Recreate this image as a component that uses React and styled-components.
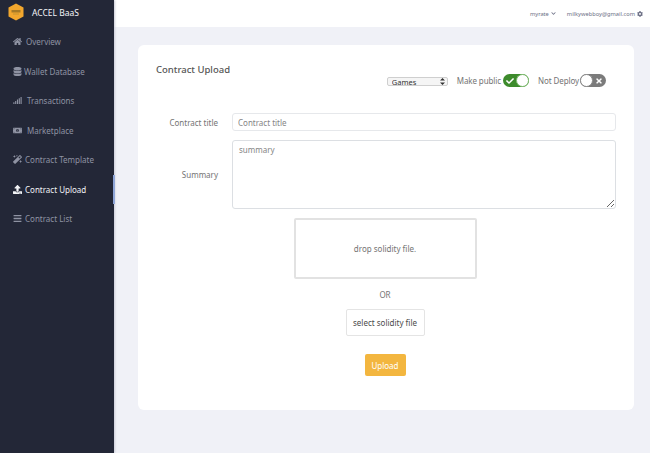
import React from "react";
import styled, { createGlobalStyle } from "styled-components";
import { FaHome, FaDatabase, FaSignal, FaMoneyBillAlt, FaMagic, FaUpload, FaBars, FaCog, FaChevronDown, FaCheck, FaTimes } from "react-icons/fa";

const GlobalStyle = createGlobalStyle`
  html, body { margin: 0; padding: 0; height: 100%; overflow: hidden; }
  body { font-family: "Noto Sans", "Liberation Sans", sans-serif; background: #f0f1f7; }
  * { box-sizing: border-box; }
`;

const menu = [
  { label: "Overview", icon: FaHome, gap: 4 },
  { label: "Wallet Database", icon: FaDatabase, gap: 2 },
  { label: "Transactions", icon: FaSignal, gap: 5 },
  { label: "Marketplace", icon: FaMoneyBillAlt, gap: 5 },
  { label: "Contract Template", icon: FaMagic, gap: 3 },
  { label: "Contract Upload", icon: FaUpload, active: true, gap: 3 },
  { label: "Contract List", icon: FaBars, gap: 3 },
];

const App = () => {
  return (
    <Page>
      <GlobalStyle />
      <Sidebar>
        <Brand>
          <svg width="16" height="18" viewBox="0 0 16 18">
            <polygon points="8,0.5 15.5,4.5 15.5,13.5 8,17.5 0.5,13.5 0.5,4.5" fill="#f2a72e" />
            <rect x="3.5" y="7" width="9" height="2.5" fill="#a67a26" />
            <rect x="5" y="10.5" width="6" height="1" fill="#c4932f" />
          </svg>
          <BrandName>ACCEL BaaS</BrandName>
        </Brand>
        <Menu>
          {menu.map((item) => (
            <MenuItem key={item.label} $active={item.active} $gap={item.gap}>
              <item.icon size={9} />
              {item.label}
            </MenuItem>
          ))}
        </Menu>
      </Sidebar>
      <Main>
        <Header>
          <HeaderLink>
            myrate <FaChevronDown size={5} />
          </HeaderLink>
          <HeaderLink>
            milkywebboy@gmail.com <FaCog size={6} />
          </HeaderLink>
        </Header>
        <Content>
          <Card>
            <CardTop>
              <Title>Contract Upload</Title>
              <Controls>
                <SelectWrap>
                  <CategorySelect defaultValue="Games">
                    <option>Games</option>
                  </CategorySelect>
                  <SelectArrows width="5" height="7" viewBox="0 0 5 7">
                    <path d="M2.5 0L5 2.6H0zM2.5 7L0 4.4h5z" fill="#333" />
                  </SelectArrows>
                </SelectWrap>
                <ToggleLabel $gapRight={2}>Make public</ToggleLabel>
                <Toggle $on>
                  <FaCheck size={8} />
                  <Knob $on />
                </Toggle>
                <ToggleLabel $gapLeft={9} $gapRight={1}>Not Deploy</ToggleLabel>
                <Toggle>
                  <Knob />
                  <FaTimes size={8} />
                </Toggle>
              </Controls>
            </CardTop>
            <FormRow>
              <FieldLabel>Contract title</FieldLabel>
              <TextInput placeholder="Contract title" />
            </FormRow>
            <FormRow>
              <FieldLabel>Summary</FieldLabel>
              <SummaryInput placeholder="summary" />
            </FormRow>
            <UploadColumn>
              <DropZone>drop solidity file.</DropZone>
              <OrText>OR</OrText>
              <SelectButton>select solidity file</SelectButton>
              <UploadButton>Upload</UploadButton>
            </UploadColumn>
          </Card>
        </Content>
      </Main>
    </Page>
  );
};

export default App;

const Page = styled.div`
  display: flex;
  width: 650px;
  height: 453px;
  overflow: hidden;
`;
const Sidebar = styled.aside`
  width: 114px;
  flex-shrink: 0;
  background: #232737;
  box-shadow: 1px 0 2px #c9cbd6;
  position: relative;
  z-index: 1;
`;
const Brand = styled.div`
  display: flex;
  align-items: center;
  height: 27px;
  padding: 0 0 3px 8px;
  gap: 8px;
`;
const BrandName = styled.span`
  color: #f4f5f8;
  font-size: 8.5px;
`;
const Menu = styled.nav`
  display: flex;
  flex-direction: column;
`;
const MenuItem = styled.div`
  display: flex;
  align-items: center;
  width: 115px;
  height: 29.5px;
  padding-left: 13px;
  gap: ${(p) => p.$gap}px;
  font-size: 8px;
  color: ${(p) => (p.$active ? "#f2f3f6" : "#8f93a3")};
  border-right: 2px solid ${(p) => (p.$active ? "#8fa6d8" : "transparent")};
  svg { flex-shrink: 0; }
`;
const Main = styled.div`
  flex: 1;
  display: flex;
  flex-direction: column;
  min-width: 0;
`;
const Header = styled.header`
  height: 27px;
  background: #fff;
  display: flex;
  align-items: center;
  justify-content: flex-end;
  gap: 11px;
  padding: 0 7px 0 0;
`;
const HeaderLink = styled.span`
  display: flex;
  align-items: center;
  gap: 2px;
  font-size: 5.7px;
  color: #6d7086;
`;
const Content = styled.main`
  flex: 1;
  padding: 18px 16px 0 24px;
`;
const Card = styled.section`
  height: 365px;
  background: #fff;
  border-radius: 6px;
  padding: 0 18px;
`;
const CardTop = styled.div`
  display: flex;
  justify-content: space-between;
  height: 68px;
  padding: 18px 10px 0 0;
`;
const Title = styled.h2`
  margin: 0;
  font-size: 9.5px;
  font-weight: 500;
  line-height: 13px;
  color: #555;
`;
const Controls = styled.div`
  display: flex;
  align-items: center;
  height: 13px;
  margin-top: 11px;
`;
const SelectWrap = styled.div`
  position: relative;
  width: 61px;
  height: 9px;
  margin: 1px 9px 0 0;
`;
const CategorySelect = styled.select`
  appearance: none;
  display: block;
  width: 100%;
  height: 100%;
  padding: 0 0 0 4px;
  font-family: inherit;
  font-size: 7.5px;
  line-height: 9px;
  background: #f5f5f5;
  color: #333;
  border: 1px solid #cfcfcf;
  border-radius: 2px;
  outline: none;
`;
const SelectArrows = styled.svg`
  position: absolute;
  right: 3px;
  top: 1px;
`;
const ToggleLabel = styled.span`
  font-size: 8px;
  letter-spacing: -0.1px;
  color: #747474;
  margin-left: ${(p) => p.$gapLeft || 0}px;
  margin-right: ${(p) => p.$gapRight || 0}px;
`;
const Toggle = styled.div`
  width: 26px;
  height: 13px;
  border-radius: 7px;
  background: ${(p) => (p.$on ? "#3d8b2c" : "#7b7b7b")};
  color: #fff;
  display: flex;
  align-items: center;
  justify-content: space-between;
  padding-left: ${(p) => (p.$on ? 3 : 0)}px;
  padding-right: ${(p) => (p.$on ? 0 : 3)}px;
`;
const Knob = styled.span`
  width: 13px;
  height: 13px;
  border-radius: 50%;
  background: #fff;
  border: 1px solid ${(p) => (p.$on ? "#7fbc70" : "#8a8a8a")};
`;
const FormRow = styled.div`
  display: flex;
  align-items: center;
  margin-bottom: 9px;
`;
const FieldLabel = styled.label`
  width: 76px;
  padding-right: 14px;
  text-align: right;
  flex-shrink: 0;
  font-size: 8px;
  color: #747474;
`;
const TextInput = styled.input`
  flex: 1;
  min-width: 0;
  height: 18px;
  padding: 0 5px;
  border: 1px solid #e6e8eb;
  border-radius: 3px;
  outline: none;
  font-family: inherit;
  font-size: 8px;
  &::placeholder { color: #858585; }
`;
const SummaryInput = styled.textarea`
  flex: 1;
  min-width: 0;
  height: 69px;
  padding: 3px 6px;
  border: 1px solid #dcdfe3;
  border-radius: 3px;
  outline: none;
  font-family: inherit;
  font-size: 8px;
  &::placeholder { color: #858585; }
`;
const UploadColumn = styled.div`
  display: flex;
  flex-direction: column;
  align-items: center;
  padding-right: 2px;
`;
const DropZone = styled.div`
  width: 183px;
  height: 61px;
  display: flex;
  align-items: center;
  justify-content: center;
  border: 2px solid #e2e2e2;
  border-radius: 2px;
  font-size: 8px;
  color: #747474;
`;
const OrText = styled.div`
  margin-top: 10px;
  font-size: 8px;
  line-height: 12px;
  color: #747474;
`;
const SelectButton = styled.button`
  margin-top: 8px;
  width: 79px;
  height: 27px;
  padding: 0;
  background: #fff;
  border: 1px solid #e4e4e4;
  border-radius: 2px;
  font-family: inherit;
  font-size: 8px;
  color: #4a4a4a;
`;
const UploadButton = styled.button`
  margin-top: 18px;
  width: 41px;
  height: 22px;
  padding: 0;
  background: #f3b63f;
  border: none;
  border-radius: 2px;
  font-family: inherit;
  font-size: 8px;
  color: #fff;
`;
